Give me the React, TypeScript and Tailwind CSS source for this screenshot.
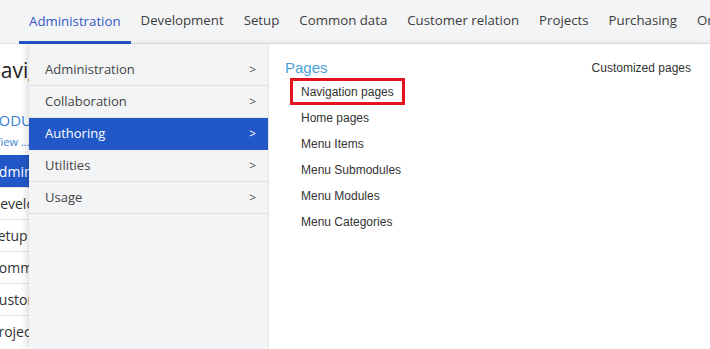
import {} from "react";

const topMenu = [
  "Administration",
  "Development",
  "Setup",
  "Common data",
  "Customer relation",
  "Projects",
  "Purchasing",
  "Orders",
];

const sideRows = ["Development", "Setup", "Common data", "Customer relation", "Projects"];

const areas = [
  { name: "Administration" },
  { name: "Collaboration" },
  { name: "Authoring", active: true },
  { name: "Utilities" },
  { name: "Usage" },
];

const pages = [
  { name: "Navigation pages", marked: true },
  { name: "Home pages" },
  { name: "Menu Items" },
  { name: "Menu Submodules" },
  { name: "Menu Modules" },
  { name: "Menu Categories" },
];

export default function App() {
  return (
    <div className="relative w-[710px] h-[349px] overflow-hidden bg-white font-['Open_Sans',sans-serif]">
      {/* top navigation */}
      <nav className="flex h-[44px] items-stretch bg-[#f3f4f6] border-b border-[#e3e4e6] pl-[19px] whitespace-nowrap">
        {topMenu.map((item, i) => (
          <div
            key={item}
            className={
              i === 0
                ? "flex items-center px-2.5 text-[13.25px] text-[#3658c4] border-b-[3px] border-[#2156c9] pt-[3px] -mb-px"
                : "flex items-center px-2.5 text-[13.25px] text-[#3d3d3d] pb-[1px]"
            }
          >
            {item}
          </div>
        ))}
      </nav>

      {/* page behind the menu */}
      <div className="flex flex-col whitespace-nowrap">
        <div className="ml-[-15px] mt-[10px] h-[32px] text-[21px] leading-[32px] text-[#222]">
          Navigation pages
        </div>
        <div className="ml-[-15px] mt-[24px] text-[15px] leading-[20px] text-[#3b7fd0]">MODULES</div>
        <div className="ml-[-6px] mt-[4px] text-[11px] leading-[16px] text-[#3b7fd0]">View ...</div>
        <div className="mt-[5px] flex flex-col">
          <div className="h-[32px] ml-[-10px] flex items-center bg-[#2157c6] text-white text-[14px]">
            Administration
          </div>
          {sideRows.map((r) => (
            <div
              key={r}
              className="h-[32px] ml-[-10px] flex items-center border-t border-[#e3e4e6] text-[14px] text-[#333]"
            >
              {r}
            </div>
          ))}
        </div>
      </div>

      {/* dropdown menu */}
      <div className="absolute left-[29px] top-[44px] right-0 bottom-0 flex shadow-[-3px_0_6px_rgba(0,0,0,0.12)]">
        <div className="w-[239px] bg-[#f3f4f6] pt-[10px]">
          {areas.map((a) => (
            <div
              key={a.name}
              className={
                a.active
                  ? "h-[32px] flex items-center justify-between pl-4 pr-[12px] bg-[#2157c6] text-white text-[13px]"
                  : "h-[32px] flex items-center justify-between pl-4 pr-[12px] border-b border-[#dfe0e2] text-[#444] text-[13px]"
              }
            >
              <span>{a.name}</span>
              <span className={a.active ? "text-[12px] text-white" : "text-[12px] text-[#555]"}>&gt;</span>
            </div>
          ))}
        </div>
        <div className="flex-1 flex justify-between bg-white border-l border-[#e6e7e9] pl-[16px] pr-[19px] pt-[15px] font-['Liberation_Sans',Arial,sans-serif]">
          <div className="flex flex-col">
            <div className="text-[15px] leading-[18px] text-[#4a9fd9]">Pages</div>
            <div className="flex flex-col pl-[5px] mt-[1px]">
              {pages.map((p) =>
                p.marked ? (
                  <div
                    key={p.name}
                    className="w-[115px] h-[27px] border-[3px] border-[#e3131f] pl-[8px] flex items-center text-[12px] text-[#333]"
                  >
                    {p.name}
                  </div>
                ) : (
                  <div key={p.name} className="h-[26px] pl-[11px] flex items-center text-[12px] text-[#333]">
                    {p.name}
                  </div>
                )
              )}
            </div>
          </div>
          <div className="mt-[1px] text-[12px] leading-[16px] text-[#333]">Customized pages</div>
        </div>
      </div>
    </div>
  );
}
